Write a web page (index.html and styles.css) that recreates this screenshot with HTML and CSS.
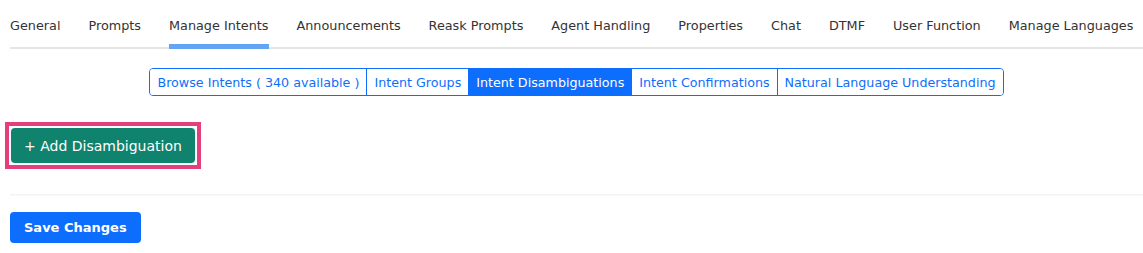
FILE: index.html
```html
<!DOCTYPE html>
<html lang="en">
<head>
  <meta charset="UTF-8" />
  <title>Manage Intents</title>
  <link rel="stylesheet" href="styles.css">
</head>
<body>
  <nav class="tabs">
    <a class="tab">General</a>
    <a class="tab">Prompts</a>
    <a class="tab active">Manage Intents</a>
    <a class="tab">Announcements</a>
    <a class="tab">Reask Prompts</a>
    <a class="tab">Agent Handling</a>
    <a class="tab">Properties</a>
    <a class="tab">Chat</a>
    <a class="tab">DTMF</a>
    <a class="tab">User Function</a>
    <a class="tab">Manage Languages</a>
  </nav>

  <div class="subnav">
    <div class="btn-group">
      <button class="seg">Browse Intents ( 340 available )</button>
      <button class="seg">Intent Groups</button>
      <button class="seg active">Intent Disambiguations</button>
      <button class="seg">Intent Confirmations</button>
      <button class="seg">Natural Language Understanding</button>
    </div>
  </div>

  <div class="actions">
    <div class="highlight">
      <button class="btn-add">+ Add Disambiguation</button>
    </div>
  </div>

  <hr class="divider">

  <div class="footer">
    <button class="btn-save">Save Changes</button>
  </div>
</body>
</html>
```

FILE: styles.css
```css
body {
  font-family: 'DejaVu Sans', sans-serif;
  margin: 0;
  padding: 0 0 0 10px;
  background: #fff;
  color: #333;
  overflow: hidden;
}
.tabs {
  display: flex;
  gap: 28px;
  border-bottom: 2px solid #e6e6e6;
  height: 47px;
  white-space: nowrap;
}
.tab {
  font-size: 12.8px;
  color: #333;
  padding-top: 18px;
  box-sizing: border-box;
  height: 49px;
}
.tab.active {
  border-bottom: 5px solid #63a4f4;
}
.subnav {
  display: flex;
  justify-content: center;
  padding-top: 19px;
}
.btn-group {
  display: flex;
  border: 1px solid #0d6efd;
  border-radius: 4px;
  overflow: hidden;
}
.seg {
  font-family: 'DejaVu Sans', sans-serif;
  font-size: 12.7px;
  color: #0d6efd;
  background: #fff;
  border: none;
  border-left: 1px solid #0d6efd;
  padding: 0 7px;
  height: 26px;
}
.seg:first-child {
  border-left: none;
}
.seg.active {
  background: #0d6efd;
  color: #fff;
}
.actions {
  padding-top: 26px;
  margin-left: -5px;
}
.highlight {
  display: inline-block;
  border: 4px solid #e43e7d;
  padding: 2px;
}
.btn-add {
  font-family: 'DejaVu Sans', sans-serif;
  font-size: 14px;
  color: #fff;
  background: #10836f;
  border: none;
  border-radius: 4px;
  height: 35px;
  padding: 0 13px;
  display: block;
}
.divider {
  border: none;
  height: 2px;
  background: linear-gradient(#f1f1f1, #fafafa);
  margin: 25px 0 16px;
}
.btn-save {
  font-family: 'DejaVu Sans', sans-serif;
  font-size: 13px;
  font-weight: bold;
  color: #fff;
  background: #0d6efd;
  border: none;
  border-radius: 4px;
  height: 31px;
  padding: 0 14px;
}
```
